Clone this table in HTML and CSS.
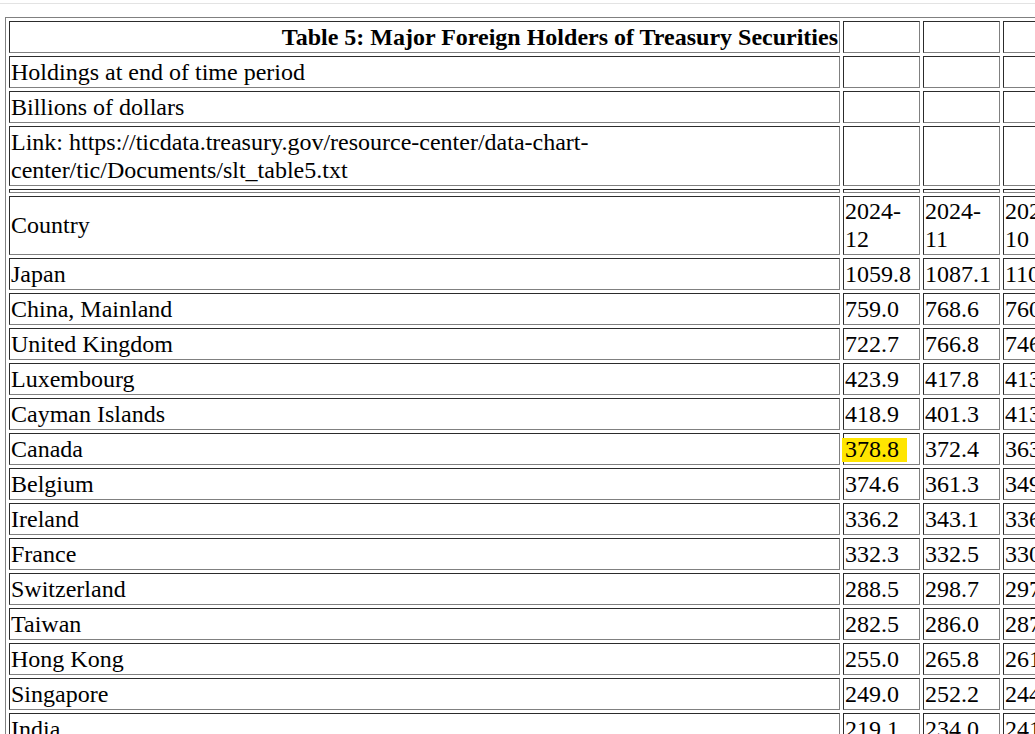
FILE: index.html
```html
<!DOCTYPE html>
<html>
<head>
<meta charset="utf-8">
<title>Table 5: Major Foreign Holders of Treasury Securities</title>
<link rel="stylesheet" href="styles.css">
</head>
<body>
<div class="topline"></div>
<table class="grid">
<colgroup>
<col class="c-name">
<col class="c-val"><col class="c-val"><col class="c-val"><col class="c-val"><col class="c-val">
</colgroup>
<tr><td class="title">Table 5: Major Foreign Holders of Treasury Securities</td><td></td><td></td><td></td><td></td><td></td></tr>
<tr><td>Holdings at end of time period</td><td></td><td></td><td></td><td></td><td></td></tr>
<tr><td>Billions of dollars</td><td></td><td></td><td></td><td></td><td></td></tr>
<tr><td>Link: https://ticdata.treasury.gov/resource-center/data-chart-center/tic/Documents/slt_table5.txt</td><td></td><td></td><td></td><td></td><td></td></tr>
<tr><td></td><td></td><td></td><td></td><td></td><td></td></tr>
<tr class="head"><td>Country</td><td>2024-12</td><td>2024-11</td><td>2024-10</td><td>2024-09</td><td>2024-08</td></tr>
<tr><td>Japan</td><td>1059.8</td><td>1087.1</td><td>1101.6</td><td>1122.9</td><td>1128.8</td></tr>
<tr><td>China, Mainland</td><td>759.0</td><td>768.6</td><td>760.1</td><td>772.0</td><td>774.6</td></tr>
<tr><td>United Kingdom</td><td>722.7</td><td>766.8</td><td>746.3</td><td>765.6</td><td>743.0</td></tr>
<tr><td>Luxembourg</td><td>423.9</td><td>417.8</td><td>413.4</td><td>404.6</td><td>399.4</td></tr>
<tr><td>Cayman Islands</td><td>418.9</td><td>401.3</td><td>413.6</td><td>399.2</td><td>378.6</td></tr>
<tr><td>Canada</td><td><span class="mark">378.8</span></td><td>372.4</td><td>363.5</td><td>371.5</td><td>368.0</td></tr>
<tr><td>Belgium</td><td>374.6</td><td>361.3</td><td>349.4</td><td>355.5</td><td>340.6</td></tr>
<tr><td>Ireland</td><td>336.2</td><td>343.1</td><td>336.4</td><td>329.0</td><td>333.6</td></tr>
<tr><td>France</td><td>332.3</td><td>332.5</td><td>330.6</td><td>365.0</td><td>354.1</td></tr>
<tr><td>Switzerland</td><td>288.5</td><td>298.7</td><td>297.8</td><td>290.0</td><td>289.8</td></tr>
<tr><td>Taiwan</td><td>282.5</td><td>286.0</td><td>287.5</td><td>291.0</td><td>286.9</td></tr>
<tr><td>Hong Kong</td><td>255.0</td><td>265.8</td><td>261.3</td><td>254.4</td><td>254.1</td></tr>
<tr><td>Singapore</td><td>249.0</td><td>252.2</td><td>244.1</td><td>233.8</td><td>240.6</td></tr>
<tr><td>India</td><td>219.1</td><td>234.0</td><td>241.3</td><td>247.2</td><td>245.0</td></tr>
<tr><td>Brazil</td><td>228.8</td><td>230.0</td><td>228.6</td><td>228.0</td><td>225.3</td></tr>
</table>
</body>
</html>
```

FILE: styles.css
```css
html, body {
  margin: 0;
  padding: 0;
  background: #ffffff;
  overflow: hidden;
}

body {
  font-family: "Liberation Serif", "Times New Roman", serif;
  font-size: 24px;
  color: #000000;
  padding-left: 5px;
}

.topline {
  height: 3px;
  border-bottom: 1px solid #e3e3e3;
  margin-left: -5px;
  margin-bottom: 13px;
}

.grid {
  table-layout: fixed;
  width: 1239px;
  border: 1px outset #808080;
  border-spacing: 3px;
}

.grid col.c-name {
  width: 831px;
}

.grid col.c-val {
  width: 77px;
}

.grid td {
  border: 1px inset #808080;
  padding: 1px;
  line-height: 28px;
  vertical-align: middle;
  text-align: left;
  white-space: normal;
  overflow-wrap: normal;
}

.grid tr.head td {
  line-height: 27.5px;
}

.grid td.title {
  font-weight: bold;
  text-align: right;
}

.mark {
  background: linear-gradient(to bottom, transparent 2px, #ffe500 2px);
  margin-left: -3px;
  padding-left: 3px;
  padding-right: 8px;
}
```
